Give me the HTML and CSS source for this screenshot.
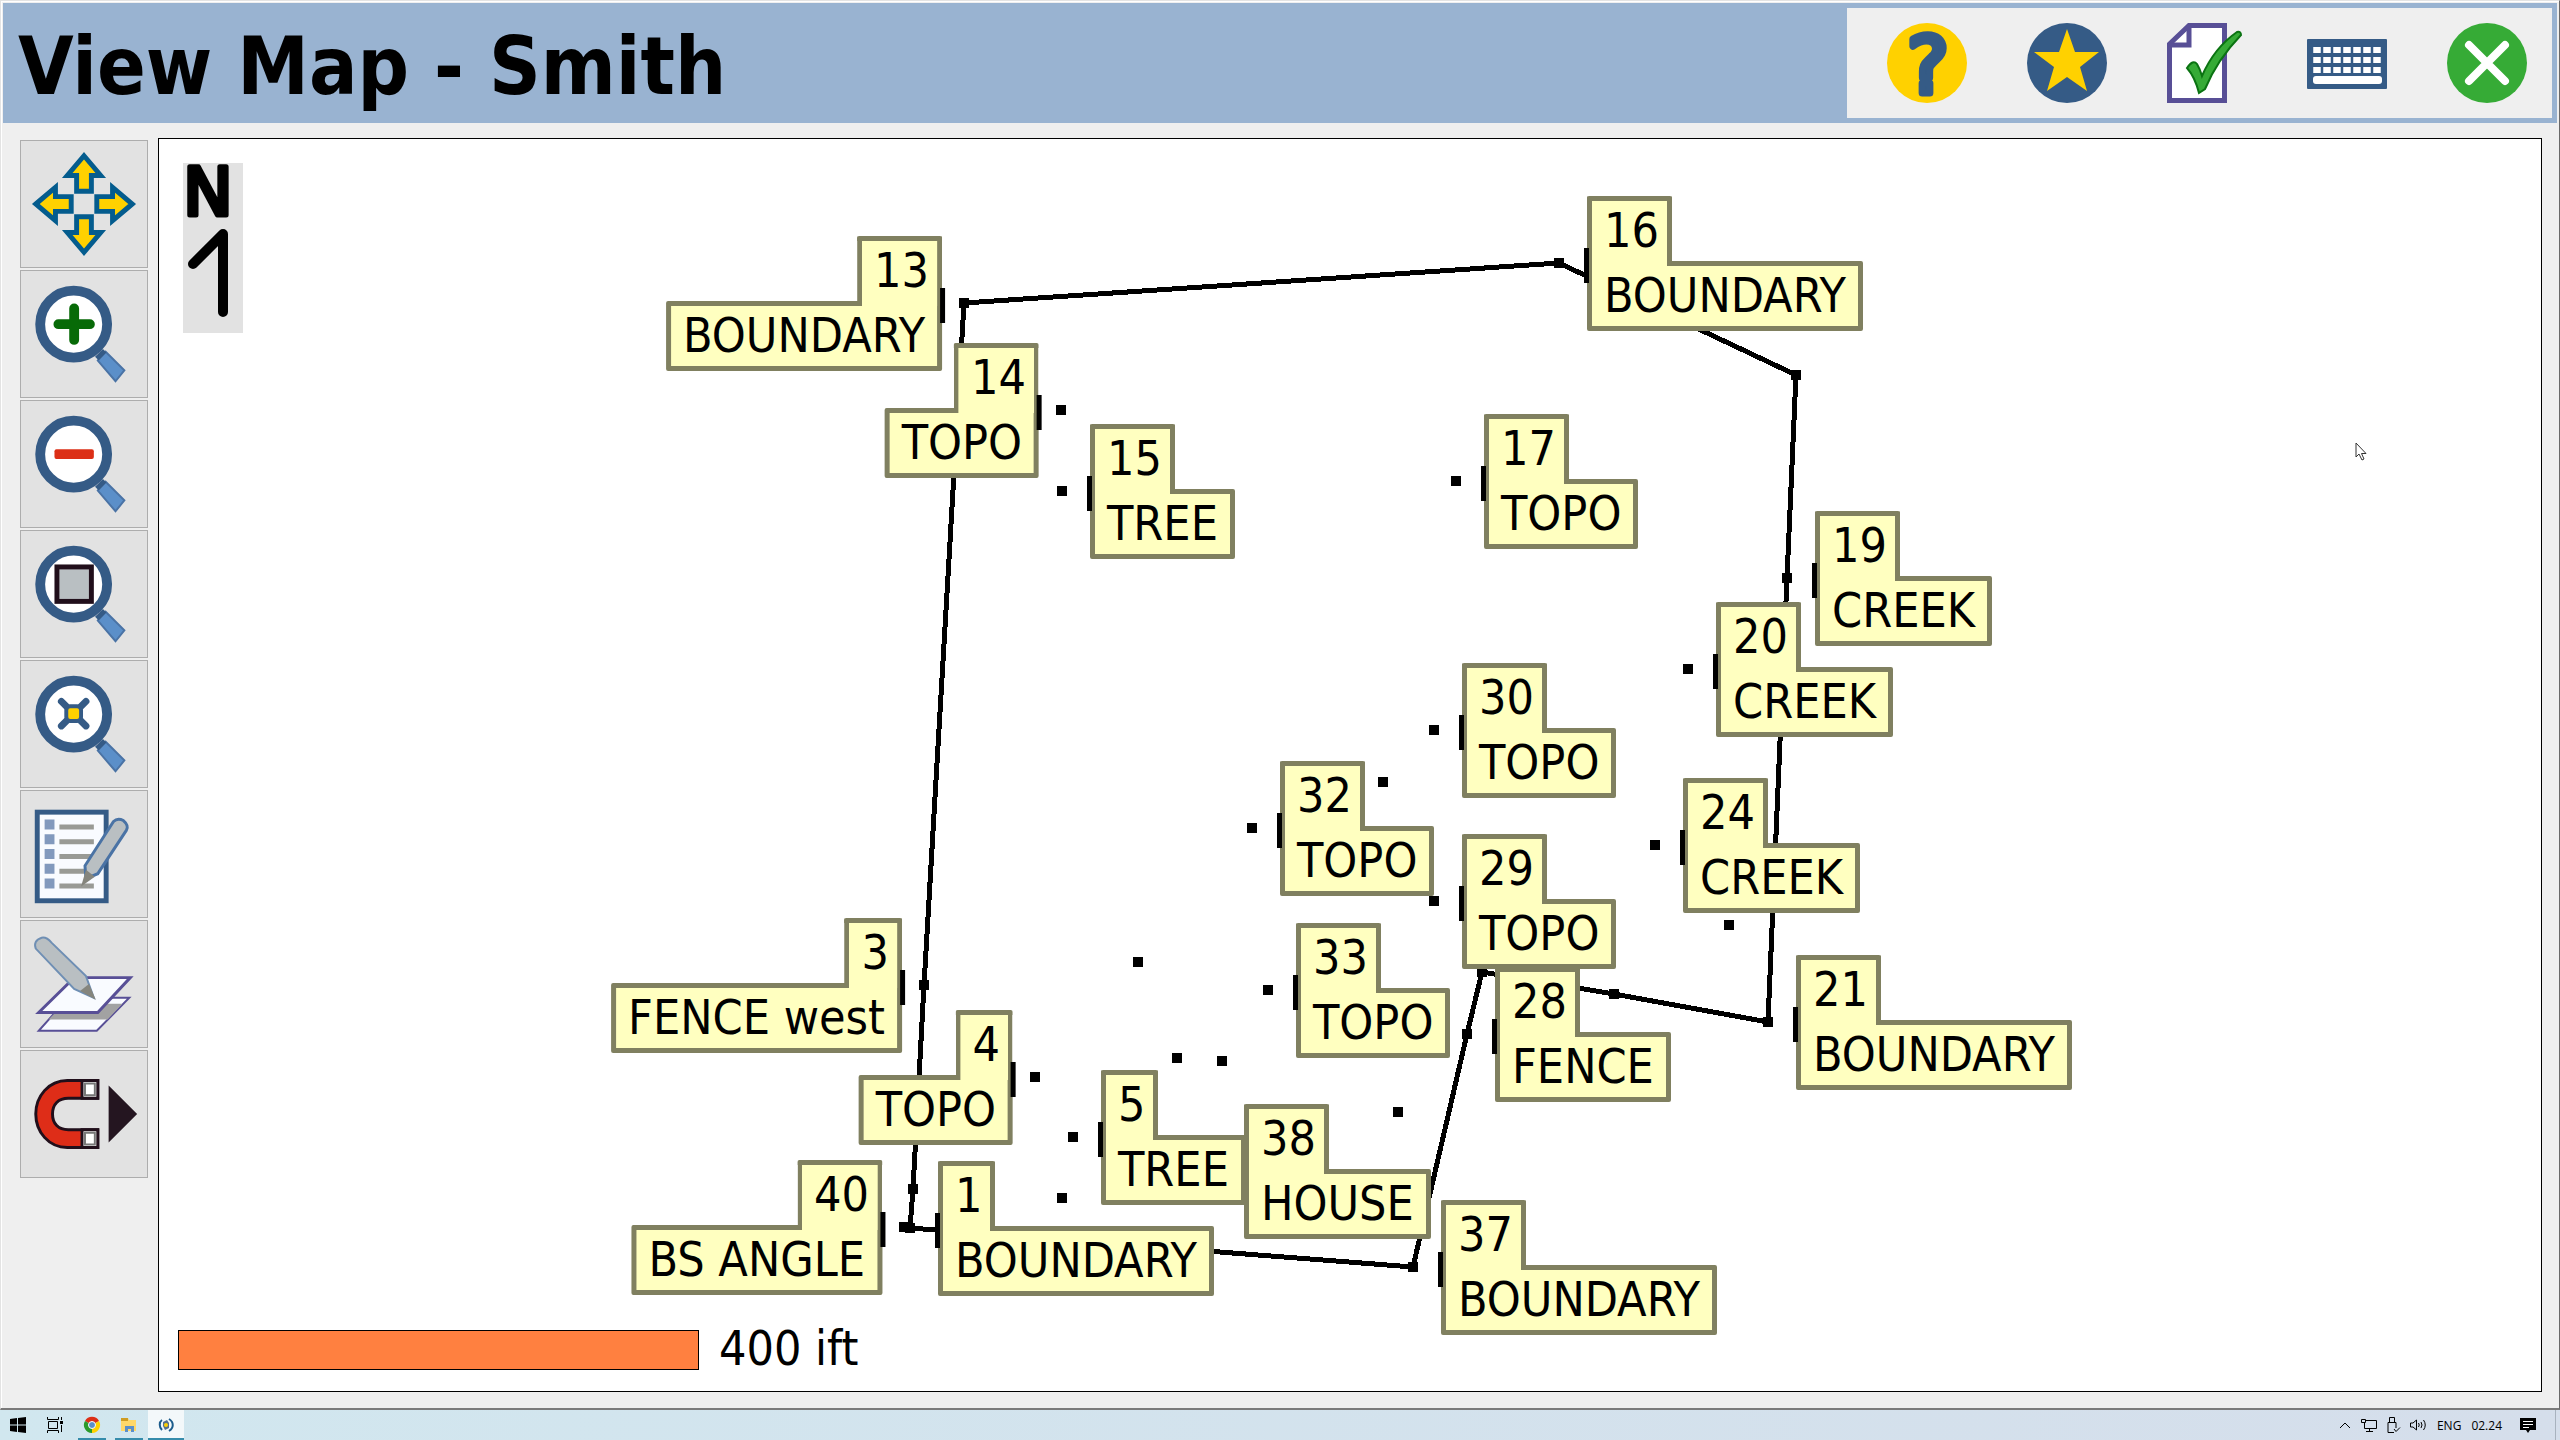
FILE: index.html
```html
<!DOCTYPE html>
<html lang="en">
<head>
    <meta charset="UTF-8">
    <meta name="viewport" content="width=device-width, initial-scale=1.0">
    <title>View Map - Smith</title>
    <link rel="stylesheet" href="styles.css">
</head>
<body>
    <div class="window">
        <header class="titlebar">
            <h1>View Map - Smith</h1>
            <div class="actions">
                <button type="button" aria-label="Help">
                    <svg viewBox="0 0 80 80">
                        <circle cx="40" cy="40" r="40" fill="#ffd100"/>
                        <text class="help-mark" x="41" y="70" text-anchor="middle">?</text>
                    </svg>
                </button>
                <button type="button" aria-label="Favorites">
                    <svg viewBox="0 0 80 80">
                        <circle cx="40" cy="40" r="40" fill="#355b86"/>
                        <path d="M40 6L48 29H72L53 44L60 68L40 54L20 68L27 44L7 29H32Z" fill="#ffd100"/>
                    </svg>
                </button>
                <button type="button" aria-label="Tasks">
                    <svg viewBox="0 0 80 80">
                        <path d="M22 2.5H57.500V77.500H2.500V21Z" fill="#fff" stroke="#584f96" stroke-width="5"/>
                        <path d="M22 3V22H3" fill="none" stroke="#584f96" stroke-width="5"/>
                        <path d="M20 45Q26 36 30 41Q33 46 35 53Q47 25 70 9Q74 8 74 12Q50 37 38 66L32 70Q28 54 20 45Z" fill="#36ab36" stroke="#0b7312" stroke-width="2"/>
                    </svg>
                </button>
                <button type="button" aria-label="Keyboard">
                    <svg viewBox="0 0 80 80">
                        <rect y="16" width="80" height="50" rx="1" fill="#355b86"/>
                        <rect x="6" y="53" width="69" height="8" rx="3" fill="#fff"/>
                        <path d="M10 24V30M20 24V30M30 24V30M40 24V30M50 24V30M60 24V30M70 24V30M10 34V40M20 34V40M30 34V40M40 34V40M50 34V40M60 34V40M70 34V40M10 44V50M20 44V50M30 44V50M40 44V50M50 44V50M60 44V50M70 44V50" stroke="#fff" stroke-width="7.500"/>
                    </svg>
                </button>
                <button type="button" aria-label="Close">
                    <svg viewBox="0 0 80 80">
                        <circle cx="40" cy="40" r="40" fill="#36ab36"/>
                        <path d="M22 22L58 58M58 22L22 58" stroke="#fff" stroke-width="8" stroke-linecap="round"/>
                    </svg>
                </button>
            </div>
        </header>

        <main class="content">
            <div class="tools">
                <button type="button" aria-label="Pan">
                    <svg viewBox="0 0 128 128">
                        <g fill="#ffd100" stroke="#045c8e" stroke-width="5">
                            <path id="arrow" d="M64 15L81 35H71.500V51H56.500V35H47Z"/>
                            <use href="#arrow" transform="rotate(90 64 64)"/>
                            <use href="#arrow" transform="rotate(180 64 64)"/>
                            <use href="#arrow" transform="rotate(270 64 64)"/>
                        </g>
                    </svg>
                </button>
                <button type="button" aria-label="Zoom in">
                    <svg viewBox="0 0 128 128">
                        <g id="lens">
                            <path d="M86 82L105 101L96 112L78 91Z" fill="#5b8fc9" stroke="#4a73a5" stroke-width="2"/>
                            <circle cx="53.500" cy="54" r="34" fill="#fff" stroke="#355b86" stroke-width="10"/>
                            <path d="M77 89L85 81" stroke="#355b86" stroke-width="5"/>
                        </g>
                        <path d="M38 54H70M54 38V70" stroke="#076a07" stroke-width="10" stroke-linecap="round"/>
                    </svg>
                </button>
                <button type="button" aria-label="Zoom out">
                    <svg viewBox="0 0 128 128">
                        <use href="#lens"/>
                        <rect x="34" y="49" width="40" height="10" rx="2" fill="#dc2f16"/>
                    </svg>
                </button>
                <button type="button" aria-label="Zoom window">
                    <svg viewBox="0 0 128 128">
                        <use href="#lens"/>
                        <rect x="36.500" y="36.500" width="35" height="35" fill="#b9bfc2" stroke="#210f1b" stroke-width="5"/>
                    </svg>
                </button>
                <button type="button" aria-label="Zoom extents">
                    <svg viewBox="0 0 128 128">
                        <use href="#lens"/>
                        <path d="M41 41L66 66M66 41L41 66" stroke="#355b86" stroke-width="7" stroke-linecap="round"/>
                        <rect x="46" y="46" width="15" height="15" rx="4" fill="#ffd100" stroke="#355b86" stroke-width="4"/>
                    </svg>
                </button>
                <button type="button" aria-label="Map settings">
                    <svg viewBox="0 0 128 128">
                        <rect x="16.500" y="21.500" width="70" height="90" fill="#f9fbff" stroke="#355b86" stroke-width="5"/>
                        <path d="M24 34H34M24 49H34M24 64H34M24 79H34M24 94H34" stroke="#8299bd" stroke-width="10"/>
                        <path d="M39 36.500H74M39 51.500H74M39 66.500H74M39 81.500H74M39 96.500H74" stroke="#999a95" stroke-width="5"/>
                        <path d="M94 31Q98 27 104 30Q110 35 107 40L78 84L66 89L65 76Z" fill="#b9bfc2" stroke="#4a73a5" stroke-width="3"/>
                        <path d="M66 80L75 87L61 97Z" fill="#85857d"/>
                    </svg>
                </button>
                <button type="button" aria-label="Layers">
                    <svg viewBox="0 0 128 128">
                        <path d="M48 78H110L77 111.500H18Z" fill="#f9fbff" stroke="#584f96" stroke-width="2"/>
                        <path d="M44 84H103L88 100H28Z" fill="#a2a2a2"/>
                        <path d="M54 57.500H111L78 93H18Z" fill="#f9fbff" stroke="#584f96" stroke-width="3"/>
                        <path d="M15 28Q12 20 21 17Q26 16 31 22L66 56L74 78L54 69Z" fill="#b9bfc2" stroke="#6f8fb4" stroke-width="2"/>
                        <path d="M60 71L69 64L76 80Z" fill="#85857d"/>
                    </svg>
                </button>
                <button type="button" aria-label="Snap">
                    <svg viewBox="0 0 128 128">
                        <path d="M78 30H47C28 30 15 46 15 64S28 98 47 98H78V80H48C38 80 32 74 32 64S38 48 48 48H78Z" fill="#de2d18" stroke="#210f1b" stroke-width="3"/>
                        <path d="M62 30H78V48H62ZM62 80H78V98H62Z" fill="#fff" stroke="#210f1b" stroke-width="3"/>
                        <path d="M65 33H75V45H65ZM65 83H75V95H65Z" fill="#fff" stroke="#777" stroke-width="2"/>
                        <path d="M89 35L118 64L89 93Z" fill="#241520"/>
                    </svg>
                </button>
            </div>

            <div class="map" id="map">
                <svg class="survey" id="survey">
                    <polyline points="751,1089 754,1050 765,846 805,164 1400,124 1637,236 1628,439 1609,883 1455,855 1323,833 1308,895 1254,1128 751,1089"/>
                </svg>
                <svg class="north" viewBox="0 0 60 170">
                    <text x="25" y="52" text-anchor="middle">N</text>
                    <path d="M10 101L40 71V149"/>
                </svg>
                <div class="scale">
                    <div class="scale-bar"></div>
                    <span>400 ift</span>
                </div>
                <svg class="cursor" viewBox="0 0 12 19">
                    <path d="M1 1V15L4 12L7 18L9 17L6.500 11.500H11Z" fill="#fff" stroke="#333"/>
                </svg>
            </div>
        </main>
    </div>

    <footer class="taskbar">
        <div class="apps">
            <button type="button" aria-label="Start">
                <svg viewBox="0 0 16 16"><path d="M0 2L7 1V7.500H0ZM8 1L16 0V7.500H8ZM0 8.500H7V15L0 14ZM8 8.500H16V16L8 15Z"/></svg>
            </button>
            <button type="button" aria-label="Task view">
                <svg viewBox="0 0 16 16" fill="none" stroke="#000"><path d="M.5 0V2.500H11.500V0M.5 16V13.500H11.500V16M1.500 4.500H10.500V11.500H1.500ZM14.500 0V3M14.500 8V15"/><path d="M13 5.500H16" stroke-width="3"/></svg>
            </button>
            <button type="button" class="open" aria-label="Chrome">
                <svg viewBox="0 0 16 16">
                    <path d="M8 8L1 4A8 8 0 0 1 15 4Z" fill="#dc2f16"/>
                    <path d="M8 8L15 4A8 8 0 0 1 8 16Z" fill="#ffd100"/>
                    <path d="M8 8V16A8 8 0 0 1 1 4Z" fill="#2b9a2b"/>
                    <circle cx="8" cy="8" r="3.500" fill="#5b8fc9" stroke="#fff"/>
                </svg>
            </button>
            <button type="button" class="open" aria-label="Files">
                <svg viewBox="0 0 16 16"><path d="M0 1H7L8 3H15V14H0Z" fill="#ffd869"/><path d="M0 1H7V4H0Z" fill="#cf9c23"/><path d="M4 15V9H13V15H10V12H7V15Z" fill="#5b8fc9"/></svg>
            </button>
            <button type="button" class="open active" aria-label="Survey">
                <svg viewBox="0 0 16 16" fill="none"><path d="M4 3C1 5 1 10 4 13M11 2C16 5 16 11 11 14" stroke="#1b5c8c" stroke-width="2"/><path d="M5 5L9 3L11 6L11 11L7 13L5 9Z" fill="#56718c"/><circle cx="8" cy="8" r="2" fill="#ffd100"/></svg>
            </button>
        </div>
        <div class="tray">
            <svg width="12" height="16" viewBox="0 0 12 16"><path d="M1 11L6 6L11 11"/></svg>
            <svg width="16" height="16" viewBox="0 0 16 16"><path d="M5 3.500H15.500V11.500H3.500V6M8.500 12V14.500M5 14.500H12M.5 2.500H4.500V5.500H.5Z"/></svg>
            <svg width="13" height="16" viewBox="0 0 13 16"><path d="M2.500 5V.5H7.500V5M1 5.500H9V11M1 5.500V15.500H7M7 12L9 14.500L13 10.500"/></svg>
            <svg width="17" height="16" viewBox="0 0 17 16"><path d="M.5 6H3L6.500 3V13L3 10H.5ZM8.500 6Q10 8 8.500 10M11 5Q13 8 11 11M13.500 3Q17 8 13.500 13"/></svg>
            <span>ENG</span>
            <span class="clock">02.24</span>
            <svg width="16" height="16" viewBox="0 0 16 16"><path d="M0 1H16V13H10L8 16L6 13H0Z" fill="#000" stroke="none"/><path d="M3 4.500H13M3 7.500H13M3 10.500H9" stroke="#fff"/></svg>
        </div>
    </footer>

    <script>
        // x, y are the point's place on the map; points without a code get no label
        const points = [
            { n: 1, code: "BOUNDARY", x: 751, y: 1089 },
            { n: 3, code: "FENCE west", x: 765, y: 846, side: "left" },
            { n: 4, code: "TOPO", x: 876, y: 938, side: "left" },
            { n: 5, code: "TREE", x: 914, y: 998 },
            { n: 13, code: "BOUNDARY", x: 805, y: 164, side: "left" },
            { n: 14, code: "TOPO", x: 902, y: 271, side: "left" },
            { n: 15, code: "TREE", x: 903, y: 352 },
            { n: 16, code: "BOUNDARY", x: 1400, y: 124 },
            { n: 17, code: "TOPO", x: 1297, y: 342 },
            { n: 19, code: "CREEK", x: 1628, y: 439 },
            { n: 20, code: "CREEK", x: 1529, y: 530 },
            { n: 21, code: "BOUNDARY", x: 1609, y: 883 },
            { n: 24, code: "CREEK", x: 1496, y: 706 },
            { n: 29, code: "TOPO", x: 1275, y: 762 },
            { n: 28, code: "FENCE", x: 1308, y: 895 },
            { n: 30, code: "TOPO", x: 1275, y: 591 },
            { n: 32, code: "TOPO", x: 1093, y: 689 },
            { n: 33, code: "TOPO", x: 1109, y: 851 },
            { n: 37, code: "BOUNDARY", x: 1254, y: 1128 },
            { n: 38, code: "HOUSE", x: 1057, y: 1032, noTick: true },
            { n: 40, code: "BS ANGLE", x: 745, y: 1088, side: "left" },
            { x: 754, y: 1050 },
            { x: 979, y: 823 },
            { x: 1018, y: 919 },
            { x: 1063, y: 922 },
            { x: 903, y: 1059 },
            { x: 1224, y: 643 },
            { x: 1570, y: 786 },
            { x: 1239, y: 973 },
            { x: 1637, y: 236 },
            { x: 1323, y: 833 },
            { x: 1455, y: 855 }
        ];

        const map = document.getElementById("map");
        const survey = document.getElementById("survey");

        points.forEach(p => {
            const dot = document.createElementNS("http://www.w3.org/2000/svg", "rect");
            dot.setAttribute("x", p.x - 5);
            dot.setAttribute("y", p.y - 5);
            dot.setAttribute("width", 10);
            dot.setAttribute("height", 10);
            survey.appendChild(dot);

            if (!p.code) return;

            const label = document.createElement("div");
            label.className = "label" + (p.side === "left" ? " label-left" : "") + (p.noTick ? " no-tick" : "");
            label.style.left = (p.side === "left" ? p.x - 22 : p.x + 28) + "px";
            label.style.top = (p.y - 67) + "px";
            label.innerHTML = `<span class="num">${p.n}</span><span class="code">${p.code}</span>`;
            map.appendChild(label);
        });
    </script>
</body>
</html>
```

FILE: styles.css
```css
* {
    margin: 0;
    padding: 0;
    box-sizing: border-box;
}
body {
    height: 100vh;
    display: flex;
    flex-direction: column;
    font-family: "DejaVu Sans Condensed", "DejaVu Sans", sans-serif;
    color: #000;
    overflow: hidden;
}
button {
    border: none;
    background: none;
}
svg {
    display: block;
    overflow: visible;
}
.window {
    flex: 1;
    min-height: 0;
    display: flex;
    flex-direction: column;
    padding: 2px;
    background-color: #efefef;
    border: 1px solid #e3e3e3;
    border-right-color: #696969;
    border-bottom: 2px solid #7a7a7a;
    box-shadow: inset 1px 1px 0 #fff;
}
.titlebar {
    height: 120px;
    display: flex;
    justify-content: space-between;
    align-items: center;
    padding: 5px 5px 5px 15px;
    background-color: #99b3d1;
}
.titlebar h1 {
    padding-top: 8px;
    font-size: 80px;
    line-height: 100px;
    font-weight: bold;
    white-space: nowrap;
}
.actions {
    height: 110px;
    display: flex;
    align-items: center;
    gap: 60px;
    padding: 0 25px 0 40px;
    background-color: #efefef;
}
.actions button {
    width: 80px;
    height: 80px;
}
.help-mark {
    font-family: "DejaVu Sans", sans-serif;
    font-size: 78px;
    fill: #355b86;
    stroke: #355b86;
    stroke-width: 7px;
    stroke-linejoin: round;
}
.content {
    flex: 1;
    min-height: 0;
    display: flex;
    gap: 10px;
    padding: 15px 15px 14px 17px;
}
.tools {
    display: flex;
    flex-direction: column;
    gap: 2px;
    padding-top: 2px;
}
.tools button {
    width: 128px;
    height: 128px;
    background-color: #e2e2e2;
    border: 1px solid #adadad;
}
.map {
    position: relative;
    flex: 1;
    display: flex;
    flex-direction: column;
    justify-content: space-between;
    align-items: flex-start;
    padding: 24px 19px 14px;
    background-color: #fff;
    border: 1px solid #000;
    overflow: hidden;
}
.survey {
    position: absolute;
    top: 0;
    left: 0;
    width: 100%;
    height: 100%;
}
.survey polyline {
    fill: none;
    stroke: #000;
    stroke-width: 5px;
    shape-rendering: crispEdges;
}
.north {
    width: 60px;
    height: 170px;
    margin-left: 5px;
    background-color: #e2e2e2;
}
.north text {
    font-family: "DejaVu Sans", sans-serif;
    font-size: 66px;
    stroke: #000;
    stroke-width: 5px;
    stroke-linejoin: round;
}
.north path {
    fill: none;
    stroke: #000;
    stroke-width: 10px;
    stroke-linecap: round;
    stroke-linejoin: round;
}
.scale {
    display: flex;
    align-items: center;
    gap: 20px;
    font-size: 48px;
    line-height: 50px;
}
.scale span {
    padding-bottom: 4px;
}
.scale-bar {
    width: 521px;
    height: 40px;
    background-color: #ff8040;
    border: 1px solid #000;
}
.cursor {
    position: absolute;
    left: 2196px;
    top: 303px;
    width: 12px;
    height: 19px;
}
.label {
    position: absolute;
    display: flex;
    flex-direction: column;
    align-items: flex-start;
    font-size: 48px;
    line-height: 58px;
    white-space: nowrap;
}
.label-left {
    align-items: flex-end;
    transform: translateX(-100%);
}
.num, .code {
    height: 70px;
    background-color: #ffffc0;
    border: 5px solid #808060;
    border-radius: 2px;
}
.num {
    position: relative;
    z-index: 1;
    margin-bottom: -5px;
    padding: 0 8px 0 12px;
    border-bottom: none;
}
.code {
    padding: 0 12px;
}
.label::before {
    content: "";
    position: absolute;
    z-index: 2;
    left: -3px;
    top: 52px;
    width: 5px;
    height: 35px;
    background-color: #000;
}
.label-left::before {
    left: auto;
    right: -3px;
}
.no-tick::before {
    display: none;
}
.taskbar {
    height: 30px;
    display: flex;
    justify-content: space-between;
    background: linear-gradient(to right, #d1e7ef, #d5deeb);
    font-family: "Open Sans", sans-serif;
    font-size: 12px;
}
.apps {
    display: flex;
    gap: 1px;
}
.apps button {
    width: 36px;
    display: flex;
    justify-content: center;
    align-items: center;
}
.apps svg {
    width: 16px;
    height: 16px;
}
.apps .open {
    background: linear-gradient(#368cab, #368cab) center bottom / 28px 2px no-repeat;
}
.apps .active {
    background-color: #f3f8fa;
    background-size: 36px 2px;
}
.tray {
    display: flex;
    align-items: center;
    gap: 10px;
    margin-right: 4px;
    padding-right: 19px;
    border-right: 1px solid #a8b2be;
}
.tray svg {
    fill: none;
    stroke: #000;
}
.clock {
    margin-right: 8px;
}
```
